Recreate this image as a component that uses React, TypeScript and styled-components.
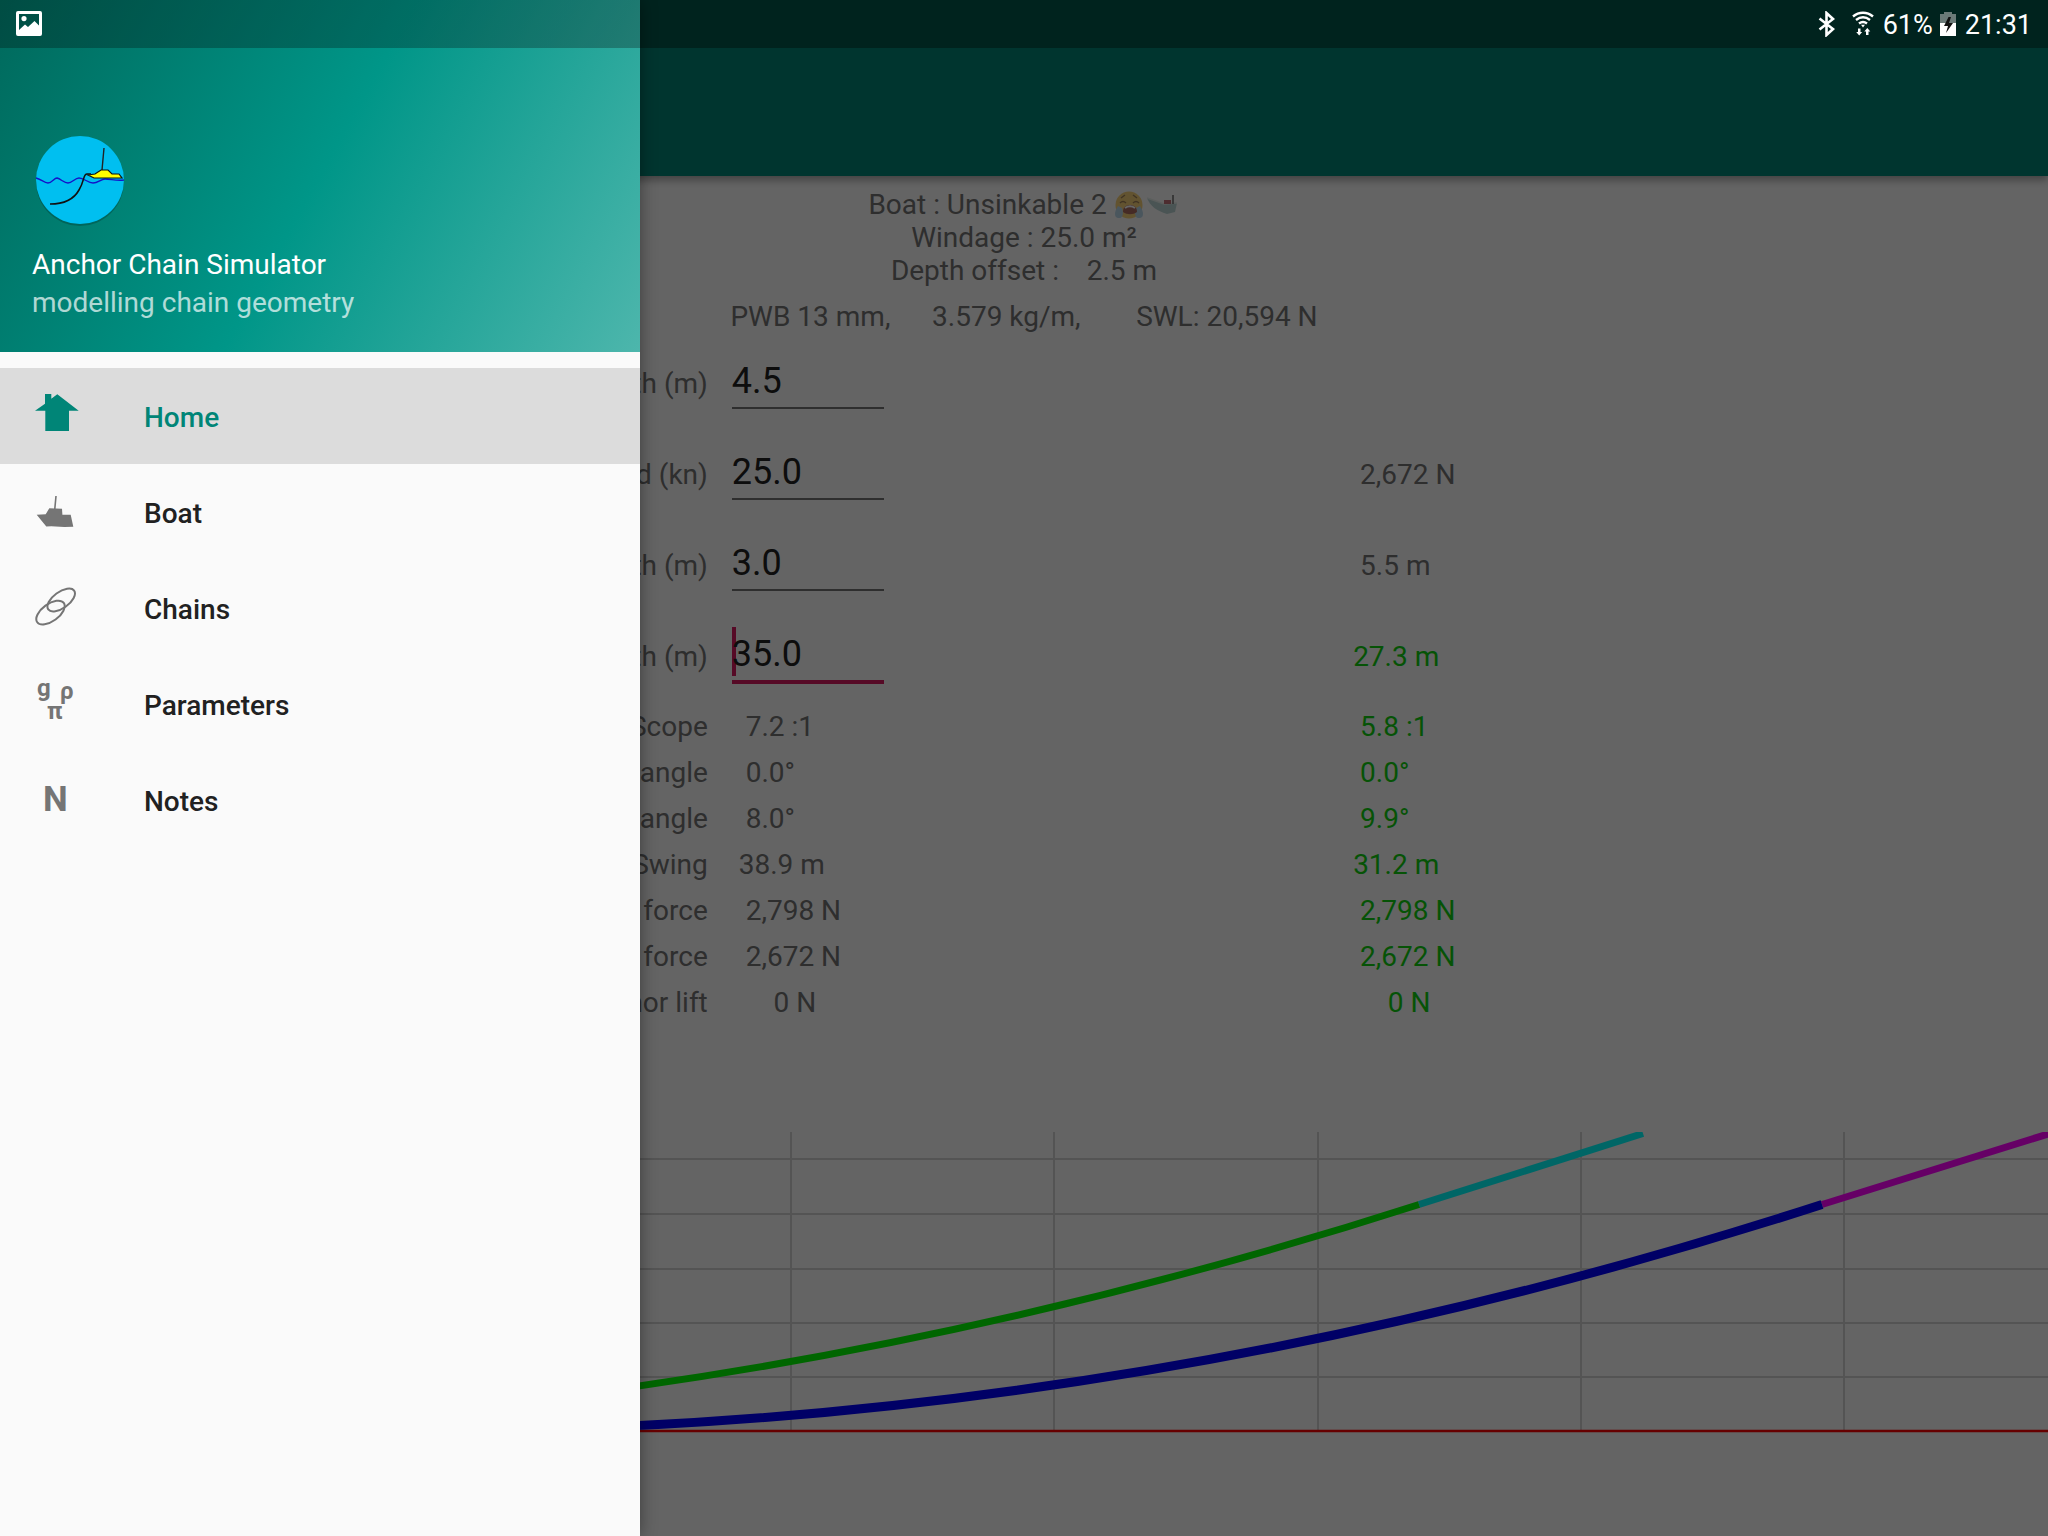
import React from 'react';
import styled, { createGlobalStyle } from 'styled-components';

const GlobalStyle = createGlobalStyle`
  *, *::before, *::after { box-sizing: border-box; }
  body {
    margin: 0;
    background: #fafafa;
    color: #737373;
    font-family: Roboto, 'Noto Sans', sans-serif;
    font-size: 28px;
    line-height: 33px;
  }
`;

const Screen = styled.div`
  position: relative;
  min-height: 100vh;
  overflow: hidden;
`;

const AppBar = styled.header`
  height: 176px;
  background: linear-gradient(#00574b 48px, #008577 48px);
  box-shadow: 0 4px 8px rgba(0, 0, 0, 0.35);
`;

const Summary = styled.section`
  padding: 12px 0 7px;
  text-align: center;
  white-space: pre-wrap;
`;

const Line = styled.p`
  margin: 0;
`;

const BoatLine = styled(Line)`
  display: flex;
  justify-content: center;
  align-items: center;
`;

const ChainLine = styled(Line)`
  margin-top: 13px;
`;

const Emoji = styled.svg`
  width: 32px;
  height: 32px;
  margin-right: 1px;
  opacity: 0.8;
`;

const Readings = styled.table`
  width: 100%;
  table-layout: fixed;
  border-collapse: collapse;
`;

const LabelColumn = styled.col`
  width: 35%;
`;

const ValueColumn = styled.col`
  width: 30%;
`;

const Row = styled.tr<{ $tall?: boolean }>`
  height: ${p => (p.$tall ? 91 : 46)}px;

  > * {
    padding-top: ${p => (p.$tall ? 20 : 6)}px;
    padding-bottom: 0;
    vertical-align: baseline;
  }
`;

const Label = styled.th`
  padding-left: 0;
  padding-right: 9px;
  font-weight: 400;
  text-align: right;
`;

const Value = styled.td<{ $optimal?: boolean }>`
  padding-left: 15px;
  padding-right: 0;
  color: ${p => (p.$optimal ? '#0fcf0f' : 'inherit')};
  white-space: pre;
`;

const Field = styled.div<{ $focused?: boolean }>`
  position: relative;
  width: 152px;
  height: ${p => (p.$focused ? 51 : 49)}px;

  &::before {
    content: '';
    display: ${p => (p.$focused ? 'block' : 'none')};
    position: absolute;
    left: 0;
    top: -6px;
    width: 4px;
    height: 49px;
    background: #d81b60;
  }
`;

const Input = styled.input<{ $focused?: boolean }>`
  display: block;
  position: relative;
  width: 100%;
  height: 100%;
  margin: 0;
  padding: 0 0 5px;
  border: 0;
  border-bottom: ${p => (p.$focused ? '4px solid #d81b60' : '2px solid #737373')};
  outline: 0;
  background: transparent;
  color: #212121;
  font: 400 36px/42px Roboto, 'Noto Sans', sans-serif;
`;

const Chart = styled.svg`
  display: block;
  width: 100%;
  margin-top: 106px;
`;

const Scrim = styled.div`
  position: absolute;
  inset: 0;
  background: rgba(0, 0, 0, 0.6);
`;

const Drawer = styled.aside`
  position: absolute;
  top: 0;
  bottom: 0;
  left: 0;
  width: 640px;
  background: #fafafa;
  box-shadow: 0 0 16px rgba(0, 0, 0, 0.4);
`;

const DrawerHeader = styled.div`
  display: flex;
  flex-direction: column;
  justify-content: flex-end;
  height: 352px;
  padding: 0 32px 33px;
  background: linear-gradient(rgba(0, 0, 0, 0.27) 48px, transparent 48px),
    linear-gradient(119deg, #00695c, #009688, #4db6ac);
`;

const Avatar = styled.svg`
  width: 96px;
  height: 96px;
`;

const Title = styled.h1`
  margin: 20px 0 5px;
  color: #fff;
  font-size: 28px;
  font-weight: 400;
  line-height: 33px;
`;

const Subtitle = styled.p`
  margin: 0;
  color: rgba(255, 255, 255, 0.7);
`;

const Menu = styled.nav`
  display: flex;
  flex-direction: column;
  padding-top: 16px;
`;

const MenuLink = styled.a<{ $active?: boolean }>`
  display: flex;
  align-items: center;
  gap: 64px;
  height: 96px;
  padding: 0 32px;
  background: ${p => (p.$active ? '#dcdcdc' : 'transparent')};
  color: ${p => (p.$active ? '#008577' : '#212121')};
  font-weight: 500;
  text-decoration: none;
`;

const MenuIcon = styled.svg<{ $active?: boolean }>`
  flex: none;
  width: 48px;
  height: 48px;
  overflow: visible;
  color: ${p => (p.$active ? '#008577' : '#757575')};
`;

const IconText = styled.text<{ $size: number }>`
  fill: currentColor;
  font: 700 ${p => p.$size}px Roboto, 'Noto Sans', sans-serif;
`;

const MenuLabel = styled.span`
  padding-top: 3px;
`;

const StatusBar = styled.div`
  position: absolute;
  top: 0;
  left: 0;
  right: 0;
  display: flex;
  align-items: center;
  gap: 7px;
  height: 48px;
  padding: 0 16px;
  color: #fff;
  font-size: 27px;
`;

const StatusText = styled.span`
  padding-top: 2px;
`;

const StatusIcon = styled.svg<{ $w: number; $gap?: number }>`
  flex: none;
  width: ${p => p.$w}px;
  height: 26px;
  margin-right: ${p => p.$gap ?? 0}px;
`;

const Spacer = styled.div`
  flex: 1;
`;

const inputs = [
  { id: 'max-depth', label: 'Max depth (m)', value: '4.5', result: '' },
  { id: 'wind', label: 'Wind speed (kn)', value: '25.0', result: '  2,672 N' },
  { id: 'depth', label: 'Depth (m)', value: '3.0', result: '  5.5 m' },
  { id: 'length', label: 'Chain length (m)', value: '35.0', result: ' 27.3 m', focused: true, optimal: true },
];

const results = [
  ['Scope', '  7.2 :1', '  5.8 :1'],
  ['Anchor angle', '  0.0°', '  0.0°'],
  ['Bow angle', '  8.0°', '  9.9°'],
  ['Swing', ' 38.9 m', ' 31.2 m'],
  ['Bow force', '  2,798 N', '  2,798 N'],
  ['Anchor force', '  2,672 N', '  2,672 N'],
  ['Anchor lift', '      0 N', '      0 N'],
];

const menu = [
  {
    name: 'Home',
    icon: <path fill="currentColor" d="M13 2h6.3v4.7l6-4.5 21.4 16.5H37V39H13.3V18.7H3l10-7z" />,
  },
  {
    name: 'Boat',
    icon: (
      <>
        <path d="M24 8l-1.2 13" stroke="currentColor" strokeWidth="1.6" />
        <path fill="currentColor" d="M17.3 20.3L30 20.7l.4 6h8.3l2.6 12-9 .3-13-.7-5 .2L4.7 26.7l9-.4z" />
      </>
    ),
  },
  {
    name: 'Chains',
    icon: (
      <g fill="none" stroke="currentColor" strokeWidth="2">
        <ellipse cx="29.2" cy="16" rx="16" ry="8" transform="rotate(-36 29.2 16)" />
        <ellipse cx="18.5" cy="28.6" rx="16.4" ry="8.6" transform="rotate(-36 18.5 28.6)" />
      </g>
    ),
  },
  {
    name: 'Parameters',
    icon: (
      <>
        <IconText $size={24} x="5" y="16">g</IconText>
        <IconText $size={24} x="28" y="19">ρ</IconText>
        <IconText $size={24} x="15" y="39">π</IconText>
      </>
    ),
  },
  { name: 'Notes', icon: <IconText $size={35} x="11" y="35">N</IconText> },
];

const gridX = [264, 527, 791, 1054, 1318, 1581, 1844];
const gridY = [27, 82, 137, 191, 245];

function CatenaryChart() {
  return (
    <Chart viewBox="0 0 2048 302" role="img" aria-label="Chain profile">
      <g stroke="#d3d3d3" strokeWidth="2">
        {gridX.map(x => <path key={x} d={`M${x} 0v298`} />)}
        {gridY.map(y => <path key={y} d={`M0 ${y}h2048`} />)}
      </g>
      <path d="M0 299h2048" stroke="#f00" strokeWidth="2.4" />
      <g fill="none" strokeWidth="7">
        <path d="M1419 72.500l224 -71" stroke="#0ff" />
        <path d="M12 299Q715 299 1419 72.500" stroke="#0f0" />
        <path d="M1822 72.500l234 -73" stroke="#f0f" />
        <path d="M424 299Q1123 299 1822 72.500" stroke="#00f" strokeWidth="9" />
      </g>
    </Chart>
  );
}

export default function App() {
  return (
    <>
      <GlobalStyle />
      <Screen>
        <AppBar />
        <main>
          <Summary>
            <BoatLine>
              {'Boat : Unsinkable 2 '}
              <Emoji viewBox="0 0 32 32" aria-label="crying face">
                <circle cx="15" cy="16" r="13.500" fill="#f5c55a" />
                <path d="M4 17c-4 6-4 11 0 12 5 1 6-5 4-10zM26 17c4 6 4 11 0 12-5 1-6-5-4-10z" fill="#a9cfe6" />
                <path d="M6 14c2-2 4-2 6 0M25 14c-2-2-4-2-6 0M7 9l4-3M23 9l-4-3" stroke="#8a6430" strokeWidth="1.4" fill="none" />
                <path d="M9 23c0-5 3-7 7-7s7 2 7 7c-4 3-10 3-14 0z" fill="#9a4a3a" />
                <path d="M11 19c3-2 7-2 10 0" stroke="#fff" strokeWidth="2" fill="none" />
              </Emoji>
              <Emoji viewBox="0 0 32 32" aria-label="boat">
                <path d="M0 9l17 6 13-1-2 9-8 2C10 22 3 17 0 9z" fill="#a9c9c9" />
                <path d="M0 9l17 6 13-1" stroke="#dfe9e4" strokeWidth="1.4" fill="none" />
                <path d="M17 11h7v4h-7z" fill="#b3505a" />
                <path d="M26 6v9" stroke="#555" strokeWidth="1.6" />
              </Emoji>
            </BoatLine>
            <Line>Windage : 25.0 m²</Line>
            <Line>{'Depth offset :    2.5 m'}</Line>
            <ChainLine>{'PWB 13 mm,      3.579 kg/m,        SWL: 20,594 N'}</ChainLine>
          </Summary>
          <Readings>
            <colgroup>
              <LabelColumn />
              <ValueColumn />
              <col />
            </colgroup>
            <tbody>
              {inputs.map(row => (
                <Row key={row.id} $tall>
                  <Label scope="row">
                    <label htmlFor={row.id}>{row.label}</label>
                  </Label>
                  <Value>
                    <Field $focused={row.focused}>
                      <Input id={row.id} defaultValue={row.value} $focused={row.focused} />
                    </Field>
                  </Value>
                  <Value $optimal={row.optimal}>{row.result}</Value>
                </Row>
              ))}
              {results.map(([label, current, optimal]) => (
                <Row key={label}>
                  <Label scope="row">{label}</Label>
                  <Value>{current}</Value>
                  <Value $optimal>{optimal}</Value>
                </Row>
              ))}
            </tbody>
          </Readings>
          <CatenaryChart />
        </main>
        <Scrim />
        <Drawer>
          <DrawerHeader>
            <Avatar viewBox="0 0 96 96" aria-hidden="true">
              <circle cx="48" cy="50" r="44" fill="#000" opacity=".2" />
              <circle cx="48" cy="48" r="44" fill="#00bff0" />
              <path d="M4 46c5 1 8 5 12 5 4 0 6-5 9-5 4 1 7 5 11 5s7-5 11-5c5 0 9 5 14 5s8-4 12-4c6 0 11 2 19 1" fill="none" stroke="#1414c8" strokeWidth="1.4" />
              <path d="M18 72c16 0 24-5 29-14 6-10 4-16 8-16h4" fill="none" stroke="#111" strokeWidth="1.6" />
              <path d="M72 16l-2 22" stroke="#222" strokeWidth="1.4" />
              <path d="M56 43l7-1 6-4h7l4 4h7l3 4H62z" fill="#ff0" stroke="#111" strokeWidth="1.2" />
            </Avatar>
            <Title>Anchor Chain Simulator</Title>
            <Subtitle>modelling chain geometry</Subtitle>
          </DrawerHeader>
          <Menu>
            {menu.map(({ name, icon }, i) => (
              <MenuLink key={name} href={`#${name.toLowerCase()}`} $active={i === 0}>
                <MenuIcon viewBox="0 0 48 48" $active={i === 0} aria-hidden="true">{icon}</MenuIcon>
                <MenuLabel>{name}</MenuLabel>
              </MenuLink>
            ))}
          </Menu>
        </Drawer>
        <StatusBar>
          <StatusIcon $w={26} viewBox="0 0 26 26" aria-hidden="true">
            <path fillRule="evenodd" fill="#fff" d="M2 0h22a2 2 0 0 1 2 2v21a2 2 0 0 1-2 2H2a2 2 0 0 1-2-2V2a2 2 0 0 1 2-2zm1 3v16l6-5.500 3 2.500 6.500-6 4.500 4.500V3zM8 5a2.600 2.600 0 1 1 0 5.200A2.600 2.600 0 0 1 8 5z" />
          </StatusIcon>
          <Spacer />
          <StatusIcon $w={18} $gap={9} viewBox="0 0 18 26" aria-hidden="true">
            <path d="M1.500 7.500L15 18l-6.500 6V2L15 8 1.500 18.500" fill="none" stroke="#fff" strokeWidth="2.6" />
          </StatusIcon>
          <StatusIcon $w={22} $gap={2} viewBox="0 0 22 26" aria-hidden="true">
            <path d="M1 5.500c6-5 14-5 20 0M4 9c4.500-3.500 9.500-3.500 14 0M7 12.500c2.500-2 5.500-2 8 0" fill="none" stroke="#fff" strokeWidth="2.4" />
            <path d="M9 13.700L11 16.400l2-2.700z" fill="#fff" />
            <path d="M6 17.500h2.500V21h1.700l-3 3.500-3-3.500H6zM14 24v-3.500h-1.700l3-3.500 3 3.500h-1.800V24z" fill="#fff" />
          </StatusIcon>
          <StatusText>61%</StatusText>
          <StatusIcon $w={16} $gap={2} viewBox="0 0 16 26" aria-hidden="true">
            <path d="M0 3h4V1h8v2h4v22H0z" fill="#6b7a78" />
            <path d="M0 12h16v13H0z" fill="#fff" />
            <path d="M8.500 6L4 15h4l-2 7 7-10H9l2-6z" fill="#111" />
          </StatusIcon>
          <StatusText>21:31</StatusText>
        </StatusBar>
      </Screen>
    </>
  );
}
